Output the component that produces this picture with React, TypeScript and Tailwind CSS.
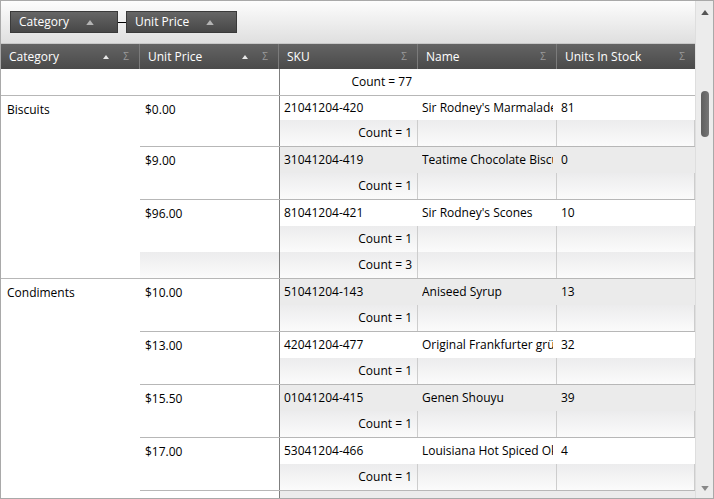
import React from 'react';

type Item = { sku: string; name: string; stock: string };
type PriceGroup = { price: string; items: Item[] };
type CatGroup = { category: string; prices: PriceGroup[]; footer?: boolean };

const groups: CatGroup[] = [
  {
    category: 'Biscuits',
    footer: true,
    prices: [
      { price: '$0.00', items: [{ sku: '21041204-420', name: "Sir Rodney's Marmalade", stock: '81' }] },
      { price: '$9.00', items: [{ sku: '31041204-419', name: 'Teatime Chocolate Biscuits', stock: '0' }] },
      { price: '$96.00', items: [{ sku: '81041204-421', name: "Sir Rodney's Scones", stock: '10' }] },
    ],
  },
  {
    category: 'Condiments',
    prices: [
      { price: '$10.00', items: [{ sku: '51041204-143', name: 'Aniseed Syrup', stock: '13' }] },
      { price: '$13.00', items: [{ sku: '42041204-477', name: 'Original Frankfurter grüne Soße', stock: '32' }] },
      { price: '$15.50', items: [{ sku: '01041204-415', name: 'Genen Shouyu', stock: '39' }] },
      { price: '$17.00', items: [{ sku: '53041204-466', name: 'Louisiana Hot Spiced Okra', stock: '4' }] },
      { price: '$19.00', items: [{ sku: '61041204-402', name: 'Northwoods Cranberry Sauce', stock: '6' }] },
    ],
  },
];

const Sigma = () => <span className="text-[10px] text-[#9a9a9a]">Σ</span>;

const SortUp = ({ className = 'text-[#e8e8e8]' }: { className?: string }) => (
  <svg width="6" height="4" viewBox="0 0 6 4" className={className}>
    <path d="M0 4 L3 0 L6 4 Z" fill="currentColor" />
  </svg>
);

const HeaderCell = ({ label, sort, last }: { label: string; sort?: boolean; last?: boolean }) => (
  <div className={`flex items-center h-full pl-[8px] pr-[10px] ${last ? 'w-[138px]' : 'w-[139px] border-r border-[#7b7b7b]'}`}>
    <span className="flex-1 text-white">{label}</span>
    {sort && (
      <span className="mr-[14px] flex items-center">
        <SortUp />
      </span>
    )}
    <Sigma />
  </div>
);

const Chip = ({ label, w }: { label: string; w: string }) => (
  <div className={`${w} h-[22px] flex items-center pl-[8px] border border-[#3a3a3a] bg-gradient-to-b from-[#666666] to-[#474747] text-white`}>
    <span>{label}</span>
    <span className="ml-[17px] flex items-center">
      <SortUp className="text-[#b4b4b4] w-[8px] h-[5px]" />
    </span>
  </div>
);

const footerBg = 'bg-gradient-to-b from-[#ececed] to-[#fbfbfb]';

const FooterRow = ({ text }: { text: string }) => (
  <div className={`flex h-[26px] ${footerBg}`}>
    <div className="w-[138px] flex items-center justify-end pr-[5px] border-r border-[#cdcdcd]">{text}</div>
    <div className="w-[139px] border-r border-[#cdcdcd]" />
    <div className="w-[138px] border-r border-[#cdcdcd]" />
  </div>
);

const DataRow = ({ item, odd, h }: { item: Item; odd: boolean; h: string }) => (
  <div className={`flex ${h} items-center ${odd ? 'bg-[#ebebeb]' : 'bg-white'}`}>
    <div className="w-[138px] pl-[4px] whitespace-nowrap overflow-hidden">{item.sku}</div>
    <div className="w-[139px] pl-[4px] pr-[4px]">
      <div className="whitespace-nowrap overflow-hidden">{item.name}</div>
    </div>
    <div className="w-[138px] pl-[4px]">{item.stock}</div>
  </div>
);

export default function App() {
  let rowIndex = 0;
  return (
    <div
      className="w-[714px] h-[499px] border border-[#a9a9a9] flex bg-white text-[12px] text-black overflow-hidden"
      style={{ fontFamily: '"Open Sans", "Noto Sans", sans-serif' }}
    >
      <div className="w-[694px] flex flex-col">
        {/* group panel */}
        <div className="h-[42px] shrink-0 flex items-center pl-[9px] bg-gradient-to-b from-[#fdfdfd] to-[#dfdfdf]">
          <Chip label="Category" w="w-[108px]" />
          <div className="w-[8px] h-px bg-black" />
          <Chip label="Unit Price" w="w-[111px]" />
        </div>

        {/* header */}
        <div className="h-[26px] shrink-0 flex bg-gradient-to-b from-[#646464] to-[#4a4a4a] border-t border-[#c8c8c8]">
          <HeaderCell label="Category" sort />
          <HeaderCell label="Unit Price" sort />
          <HeaderCell label="SKU" />
          <HeaderCell label="Name" />
          <HeaderCell label="Units In Stock" last />
        </div>

        {/* body */}
        <div className="flex-1 overflow-hidden">
          <div className="flex h-[27px] border-b border-[#b7b7b7]">
            <div className="w-[278px]" />
            <div className="w-[138px] border-l border-[#7f7f7f] flex items-center justify-end pr-[5px]">Count = 77</div>
          </div>

          {groups.map((g) => (
            <div key={g.category} className="flex border-b border-[#b7b7b7]">
              <div className="w-[139px] pl-[6px] pt-[5px]">{g.category}</div>
              <div className="flex-1 flex flex-col">
                {g.prices.map((p, pi) => {
                  const lastInGroup = pi === g.prices.length - 1;
                  return (
                    <div key={p.price} className={`flex ${lastInGroup && g.footer ? '' : 'border-b border-[#b7b7b7]'}`}>
                      <div className="w-[139px] pl-[5px] pt-[5px]">{p.price}</div>
                      <div className="flex-1 flex flex-col border-l border-[#7f7f7f]">
                        {p.items.map((it) => {
                          const odd = rowIndex % 2 === 1;
                          const h = rowIndex === 0 ? 'h-[24px]' : 'h-[26px]';
                          rowIndex++;
                          return <DataRow key={it.sku} item={it} odd={odd} h={h} />;
                        })}
                        <FooterRow text="Count = 1" />
                      </div>
                    </div>
                  );
                })}
                {g.footer && (
                  <div className="flex">
                    <div className={`w-[139px] ${footerBg}`} />
                    <div className="flex-1 border-l border-[#7f7f7f]">
                      <FooterRow text={`Count = ${g.prices.length}`} />
                    </div>
                  </div>
                )}
              </div>
            </div>
          ))}
        </div>
      </div>

      {/* scrollbar */}
      <div className="w-[18px] flex flex-col items-center bg-[#ececec] border-l border-[#dedede]">
        <div className="h-[20px] flex items-center justify-center pt-[2px]">
          <SortUp className="text-[#555555] w-[8px] h-[5px]" />
        </div>
        <div className="flex-1 w-full flex flex-col items-center">
          <div className="mt-[70px] w-[8px] h-[46px] rounded-full bg-gradient-to-r from-[#5e5e5e] to-[#767676]" />
        </div>
        <div className="h-[20px] flex items-center justify-center">
          <svg width="8" height="5" viewBox="0 0 6 4" className="text-[#888888]">
            <path d="M0 0 L3 4 L6 0 Z" fill="currentColor" />
          </svg>
        </div>
      </div>
    </div>
  );
}
